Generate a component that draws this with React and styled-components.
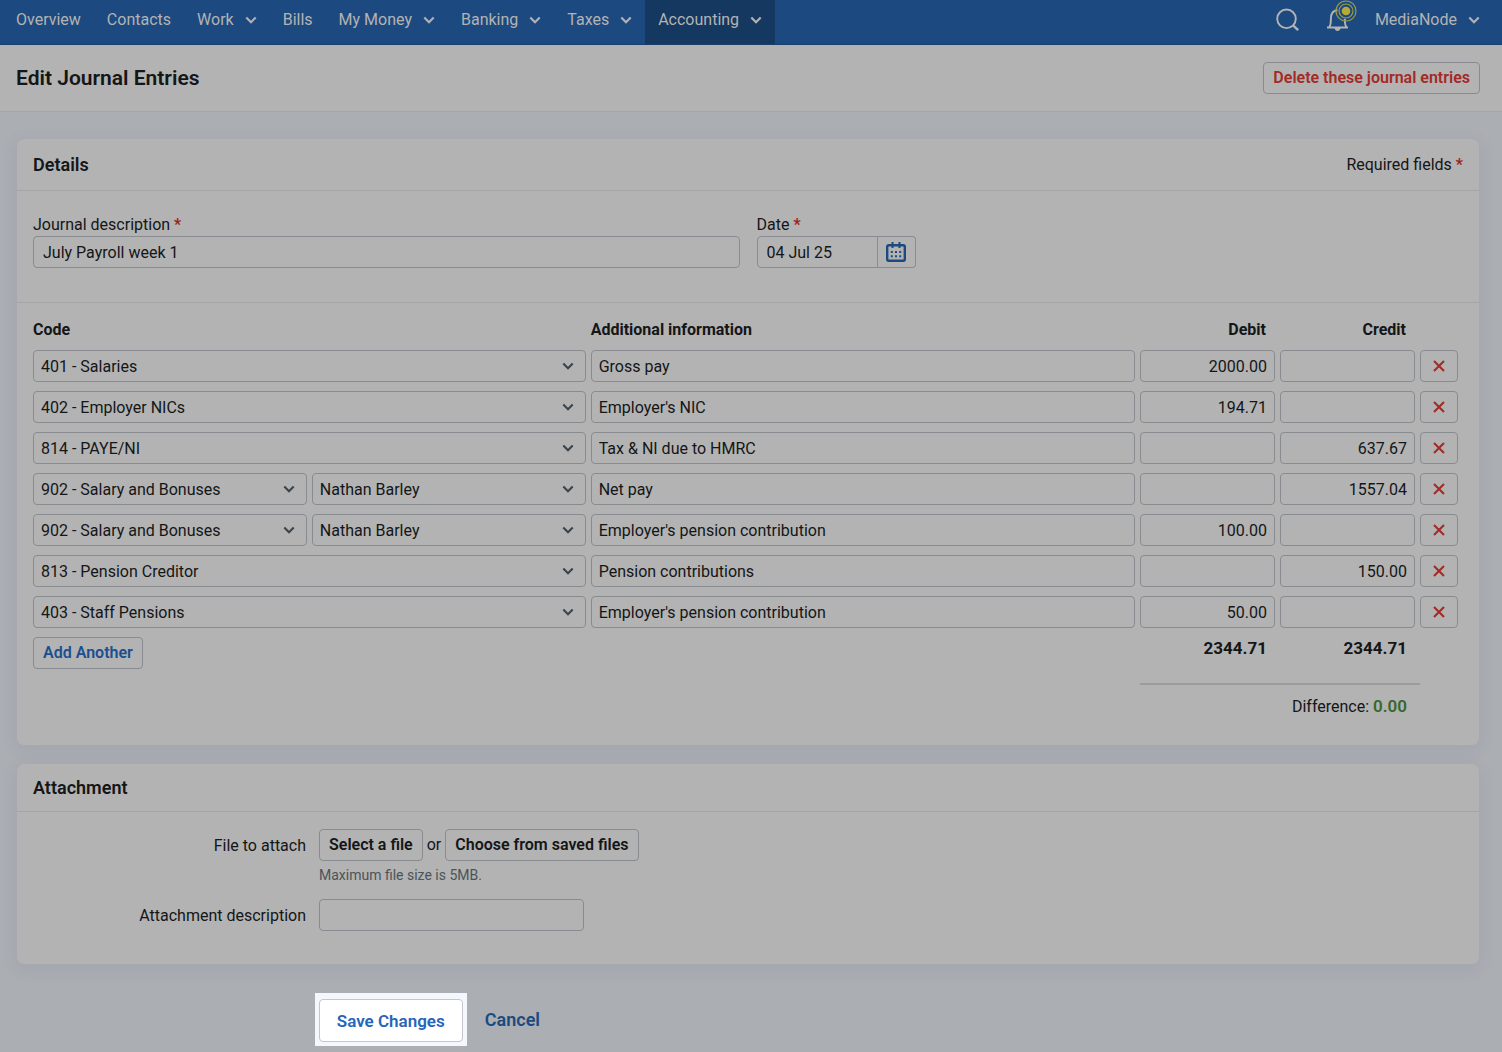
import React from "react";
import styled, { createGlobalStyle } from "styled-components";

const GlobalStyle = createGlobalStyle`
  * {
    box-sizing: border-box;
  }

  body {
    margin: 0;
    background-color: #abaeb3;
    color: #141617;
    font-family: Roboto, "Liberation Sans", sans-serif;
    font-size: 16px;
    line-height: 22px;
  }

  button,
  input,
  select {
    font: inherit;
    color: inherit;
  }
`;

const NavBar = styled.nav`
  display: flex;
  align-items: flex-start;
  justify-content: space-between;
  height: 45px;
  padding: 0 9px 0 3px;
  background-color: #1c4a80;
  border-bottom: 1px solid #1a3f6b;
`;

const NavGroup = styled.div`
  display: flex;
  align-items: flex-start;
`;

const NavLink = styled.a`
  display: flex;
  align-items: center;
  gap: 11px;
  height: 44px;
  padding: 0 13px 4px;
  color: #b3b3b3;
  text-decoration: none;
  background-color: ${(props) => (props.$active ? "#153860" : "transparent")};
`;

const NavIcon = styled.button`
  display: flex;
  height: 40px;
  padding: 0;
  margin-right: ${(props) => props.$gap || 0}px;
  border: 0;
  background: none;
`;

const TitleBar = styled.header`
  display: flex;
  align-items: center;
  justify-content: space-between;
  padding: 17px 22px 17px 16px;
  background-color: #b3b3b3;
  border-bottom: 1px solid #a3a5a8;
`;

const Title = styled.h1`
  margin: 0;
  font-size: 21px;
  font-weight: 600;
  line-height: 24px;
`;

const Button = styled.button`
  height: 32px;
  padding: 0 9px;
  font-weight: 600;
  color: ${(props) => props.$color || "#141617"};
  background-color: #b3b3b3;
  border: 1px solid #888c90;
  border-radius: 4px;
`;

const Main = styled.main`
  padding: 26px 22px 7px 16px;
`;

const Card = styled.section`
  margin-bottom: 17px;
  background-color: #b3b3b3;
  border: 1px solid #a6a9ae;
  border-radius: 8px;
  box-shadow: 0 4px 16px rgba(90, 100, 130, 0.12);
`;

const CardHeader = styled.div`
  display: flex;
  align-items: center;
  justify-content: space-between;
  padding: ${(props) => (props.$compact ? 12 : 14)}px 16px;
  border-bottom: 1px solid #a3a5a8;
`;

const CardTitle = styled.h2`
  margin: 0;
  font-size: 18px;
  font-weight: 600;
  line-height: 23px;
`;

const Required = styled.span`
  color: #9c1f1c;
  font-weight: 600;
`;

const Fields = styled.div`
  display: grid;
  grid-template-columns: 1fr 1fr;
  gap: 17px;
  padding: 22px 16px 34px;
  border-bottom: 1px solid #a3a5a8;
`;

const Label = styled.label`
  display: block;
  line-height: 23px;
`;

const Input = styled.input`
  display: block;
  width: 100%;
  height: 32px;
  padding: 0 ${(props) => props.$pad || 7}px;
  text-align: ${(props) => props.$align || "left"};
  background-color: #b3b3b3;
  border: 1px solid #888c90;
  border-radius: 4px;
`;

const DatePicker = styled.div`
  display: flex;
  width: 159px;
`;

const DateInput = styled(Input)`
  flex: 1;
  min-width: 0;
  border-radius: 4px 0 0 4px;
`;

const DateButton = styled.button`
  display: flex;
  align-items: center;
  justify-content: center;
  width: 38px;
  padding: 0;
  background-color: #b3b3b3;
  border: 1px solid #888c90;
  border-left: 0;
  border-radius: 0 4px 4px 0;
`;

const TableWrapper = styled.div`
  padding: 0 16px;
`;

const Table = styled.table`
  width: 100%;
  table-layout: fixed;
  border-collapse: collapse;
`;

const Col = styled.col`
  width: ${(props) => props.$width};
`;

const HeadCell = styled.th`
  padding: 16px ${(props) => (props.$number ? 14 : 0)}px 9px 0;
  font-weight: 700;
  text-align: ${(props) => (props.$number ? "right" : "left")};
`;

const Cell = styled.td`
  padding: 0 5px 9px 0;
`;

const Codes = styled.div`
  display: flex;
  gap: 5px;
`;

const SelectWrapper = styled.div`
  position: relative;
  flex: 1;
`;

const SelectBox = styled.select`
  display: block;
  width: 100%;
  height: 32px;
  padding: 2px 30px 0 7px;
  appearance: none;
  background-color: #b3b3b3;
  border: 1px solid #888c90;
  border-radius: 4px;
`;

const SelectArrow = styled.span`
  position: absolute;
  top: 0;
  right: 12px;
  display: flex;
  align-items: center;
  height: 32px;
  color: #3c444b;
  pointer-events: none;
`;

const DeleteButton = styled(Button)`
  display: flex;
  align-items: center;
  justify-content: center;
  width: 38px;
  padding: 0;
`;

const FootCell = styled.td`
  height: 47px;
  padding: 0;
  vertical-align: top;
`;

const Total = styled(FootCell)`
  padding-right: 13px;
  font-size: 17px;
  font-weight: 700;
  text-align: right;
`;

const Difference = styled.td`
  padding: 10px 13px 27px 0;
  text-align: right;
  border-top: 2px solid #9a9c9e;
`;

const Balance = styled.strong`
  color: #38682a;
  font-size: 17px;
  font-weight: 600;
`;

const AttachmentBody = styled.div`
  display: grid;
  grid-template-columns: 20% 1fr;
  row-gap: 14px;
  padding: 17px 16px 31px;
`;

const SideLabel = styled.label`
  padding-right: 13px;
  line-height: 34px;
  text-align: right;
`;

const FileButtons = styled.div`
  display: flex;
  align-items: center;
  gap: 4px;
`;

const Hint = styled.p`
  margin: 4px 0 0;
  color: #4b5359;
  font-size: 14px;
  line-height: 20px;
`;

const DescriptionInput = styled(Input)`
  max-width: 265px;
`;

const Actions = styled.div`
  display: flex;
  align-items: center;
  gap: 18px;
  margin: 28px 17px 0;
  padding-left: calc(20% - 11px);
`;

const Highlight = styled.div`
  padding: 6px 4px 4px;
  background-color: #f4f8fe;
`;

const SaveButton = styled(Button)`
  display: block;
  height: 43px;
  padding: 0 17px;
  color: #2765b8;
  font-size: 17px;
  background-color: #fff;
  border-color: #c3c7cd;
`;

const CancelLink = styled.a`
  color: #1c4a80;
  font-size: 18px;
  font-weight: 600;
  text-decoration: none;
`;

const Chevron = () => (
  <svg width="12" height="8" viewBox="0 0 12 8" fill="none" aria-hidden="true">
    <path d="M1.3 1.4 6 6.2l4.7-4.8" stroke="currentColor" strokeWidth="2.1" />
  </svg>
);

const SearchIcon = () => (
  <svg width="24" height="40" viewBox="0 0 24 40" fill="none" stroke="#b3b3b3">
    <circle cx="10.500" cy="18.800" r="9.300" strokeWidth="1.900" />
    <path d="m17 25.400 5.200 4.800" strokeWidth="2.400" />
  </svg>
);

const BellIcon = () => (
  <svg width="31" height="40" viewBox="0 0 31 40" fill="none">
    <path
      d="M1 27.500h21M3.300 27c1.400-1.600 1.600-3.200 1.600-8.200 0-5.400 1.700-8.300 6.600-8.800M18.800 18.800c0 5 .2 6.600 1.600 8.200"
      stroke="#b3b3b3"
      strokeWidth="1.900"
    />
    <path d="M8.500 28h6c-.4 2-1.400 3-3 3s-2.600-1-3-3Z" fill="#b3b3b3" />
    <circle cx="20" cy="11" r="4.300" fill="#b5a93a" />
    <circle cx="20" cy="11" r="7" stroke="#9b9a45" strokeWidth="1.200" />
    <circle cx="20" cy="11" r="10" stroke="#9b9a45" strokeWidth="1.200" />
  </svg>
);

const CalendarIcon = () => (
  <svg width="20" height="20" viewBox="0 0 20 20" fill="none" stroke="#1c4a80">
    <rect x="1.200" y="3.200" width="17.600" height="15.600" rx="1.500" strokeWidth="2.400" />
    <path d="M6.500 0v6M13.500 0v6" strokeWidth="2" />
    <path
      d="M4.800 10h2M9 10h2M13.200 10h2M4.800 14.200h2M9 14.200h2M13.200 14.200h2"
      strokeWidth="2"
    />
  </svg>
);

const CrossIcon = () => (
  <svg width="12" height="12" viewBox="0 0 12 12" aria-hidden="true">
    <path d="m1 1 10 10M11 1 1 11" stroke="#a32a26" strokeWidth="2.100" />
  </svg>
);

const navItems = [
  { name: "Overview" },
  { name: "Contacts" },
  { name: "Work", menu: true },
  { name: "Bills" },
  { name: "My Money", menu: true },
  { name: "Banking", menu: true },
  { name: "Taxes", menu: true },
  { name: "Accounting", menu: true, active: true },
];

const entries = [
  { code: "401 - Salaries", info: "Gross pay", debit: "2000.00" },
  { code: "402 - Employer NICs", info: "Employer's NIC", debit: "194.71" },
  { code: "814 - PAYE/NI", info: "Tax & NI due to HMRC", credit: "637.67" },
  {
    code: "902 - Salary and Bonuses",
    person: "Nathan Barley",
    info: "Net pay",
    credit: "1557.04",
  },
  {
    code: "902 - Salary and Bonuses",
    person: "Nathan Barley",
    info: "Employer's pension contribution",
    debit: "100.00",
  },
  {
    code: "813 - Pension Creditor",
    info: "Pension contributions",
    credit: "150.00",
  },
  {
    code: "403 - Staff Pensions",
    info: "Employer's pension contribution",
    debit: "50.00",
  },
];

const Select = ({ value, label }) => (
  <SelectWrapper>
    <SelectBox aria-label={label} defaultValue={value}>
      <option>{value}</option>
    </SelectBox>
    <SelectArrow>
      <Chevron />
    </SelectArrow>
  </SelectWrapper>
);

const Navigation = () => (
  <NavBar>
    <NavGroup>
      {navItems.map((item) => (
        <NavLink key={item.name} href="#" $active={item.active}>
          {item.name}
          {item.menu && <Chevron />}
        </NavLink>
      ))}
    </NavGroup>
    <NavGroup>
      <NavIcon aria-label="Search" $gap={26}>
        <SearchIcon />
      </NavIcon>
      <NavIcon aria-label="Notifications" $gap={5}>
        <BellIcon />
      </NavIcon>
      <NavLink href="#">
        MediaNode
        <Chevron />
      </NavLink>
    </NavGroup>
  </NavBar>
);

const EntryRow = ({ entry }) => (
  <tr>
    <Cell>
      <Codes>
        <Select value={entry.code} label="Code" />
        {entry.person && <Select value={entry.person} label="Person" />}
      </Codes>
    </Cell>
    <Cell>
      <Input aria-label="Additional information" defaultValue={entry.info} />
    </Cell>
    <Cell>
      <Input aria-label="Debit" $align="right" defaultValue={entry.debit} />
    </Cell>
    <Cell>
      <Input aria-label="Credit" $align="right" defaultValue={entry.credit} />
    </Cell>
    <Cell>
      <DeleteButton aria-label="Delete entry">
        <CrossIcon />
      </DeleteButton>
    </Cell>
  </tr>
);

const Details = () => (
  <Card>
    <CardHeader>
      <CardTitle>Details</CardTitle>
      <span>
        Required fields <Required>*</Required>
      </span>
    </CardHeader>
    <Fields>
      <div>
        <Label htmlFor="description">
          Journal description <Required>*</Required>
        </Label>
        <Input id="description" $pad={9} defaultValue="July Payroll week 1" />
      </div>
      <div>
        <Label htmlFor="date">
          Date <Required>*</Required>
        </Label>
        <DatePicker>
          <DateInput id="date" $pad={9} defaultValue="04 Jul 25" />
          <DateButton aria-label="Choose date">
            <CalendarIcon />
          </DateButton>
        </DatePicker>
      </div>
    </Fields>
    <TableWrapper>
      <Table>
        <colgroup>
          <Col $width="39%" />
          <Col />
          <Col $width="140px" />
          <Col $width="140px" />
          <Col $width="43px" />
        </colgroup>
        <thead>
          <tr>
            <HeadCell>Code</HeadCell>
            <HeadCell>Additional information</HeadCell>
            <HeadCell $number>Debit</HeadCell>
            <HeadCell $number>Credit</HeadCell>
            <td />
          </tr>
        </thead>
        <tbody>
          {entries.map((entry, index) => (
            <EntryRow key={index} entry={entry} />
          ))}
        </tbody>
        <tfoot>
          <tr>
            <FootCell colSpan={2}>
              <Button $color="#1c4f8f">Add Another</Button>
            </FootCell>
            <Total>2344.71</Total>
            <Total>2344.71</Total>
            <td />
          </tr>
          <tr>
            <td colSpan={2} />
            <Difference colSpan={2}>
              Difference: <Balance>0.00</Balance>
            </Difference>
            <td />
          </tr>
        </tfoot>
      </Table>
    </TableWrapper>
  </Card>
);

const Attachment = () => (
  <Card>
    <CardHeader $compact>
      <CardTitle>Attachment</CardTitle>
    </CardHeader>
    <AttachmentBody>
      <SideLabel htmlFor="file">File to attach</SideLabel>
      <div>
        <FileButtons>
          <Button id="file">Select a file</Button>
          or
          <Button>Choose from saved files</Button>
        </FileButtons>
        <Hint>Maximum file size is 5MB.</Hint>
      </div>
      <SideLabel htmlFor="attachment">Attachment description</SideLabel>
      <DescriptionInput id="attachment" />
    </AttachmentBody>
  </Card>
);

const App = () => (
  <>
    <GlobalStyle />
    <Navigation />
    <TitleBar>
      <Title>Edit Journal Entries</Title>
      <Button $color="#a32a26">Delete these journal entries</Button>
    </TitleBar>
    <Main>
      <Details />
      <Attachment />
      <Actions>
        <Highlight>
          <SaveButton>Save Changes</SaveButton>
        </Highlight>
        <CancelLink href="#">Cancel</CancelLink>
      </Actions>
    </Main>
  </>
);

export default App;
